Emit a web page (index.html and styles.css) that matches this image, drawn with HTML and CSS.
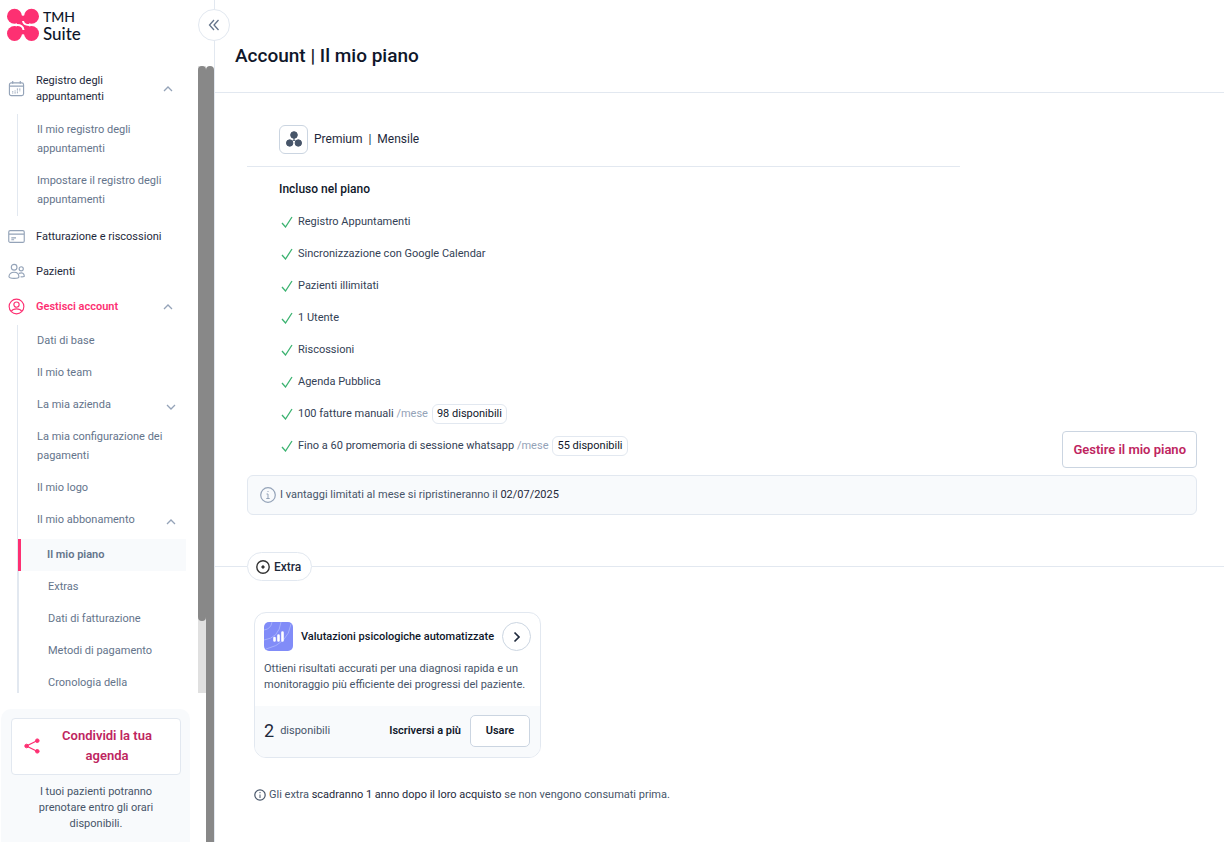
FILE: index.html
```html
<!DOCTYPE html>
<html lang="it">
<head>
    <meta charset="UTF-8">
    <meta name="viewport" content="width=device-width, initial-scale=1.0">
    <title>TMH Suite</title>
    <link rel="stylesheet" href="styles.css">
</head>
<body>
    <aside class="sidebar">
        <a href="#" class="logo">
            <svg width="34" height="34" viewBox="0 0 34 34" fill="#fd3072">
                <path d="M11 5.500q6 4.500 12 0v23q-6-4.500-12 0z"/>
                <path d="M26 17h-3q-5.500 0-6-4M8 17h3q6 0 6.500 5" fill="none" stroke="#fff" stroke-width="2"/>
                <circle cx="8.500" cy="8.300" r="7.500"/><circle cx="25.500" cy="8.300" r="7.500"/>
                <circle cx="8.500" cy="25.500" r="7.500"/><circle cx="25.500" cy="25.500" r="7.500"/>
            </svg>
            <span class="brand"><span class="tmh">TMH</span><span>Suite</span></span>
        </a>
        <button class="collapse" aria-label="Chiudi menu">
            <svg width="12" height="12" viewBox="0 0 12 12" fill="none" stroke="#64748b" stroke-width="1.300"><path d="M6 1L1.500 6L6 11M10.500 1L6 6l4.500 5"/></svg>
        </button>
        <div class="side-body">
            <div class="side-left">
                <div class="nav-wrap">
                    <nav class="nav">
                        <a href="#" class="item tall">
                            <svg class="ico" viewBox="0 0 18 18"><rect x="1.500" y="3" width="15" height="13.500" rx="2"/><path d="M1.500 6.500h15M5 1v3M13 1v3"/><path d="M5 12v2.500M7.500 11v3.500M10 9v5M12.500 9v3" stroke-dasharray="1.200 .8"/></svg>
                            <span>Registro degli appuntamenti</span>
                            <svg class="arrow" viewBox="0 0 10 6"><path d="M1 5l4-4 4 4"/></svg>
                        </a>
                        <div class="sub">
                            <a href="#">Il mio registro degli appuntamenti</a>
                            <a href="#">Impostare il registro degli appuntamenti</a>
                        </div>
                        <a href="#" class="item">
                            <svg class="ico" viewBox="0 0 18 18"><rect x=".8" y="2.800" width="16.400" height="12.400" rx="1.500"/><path d="M1 6.500h16M3.500 10.500h5M3.500 12.500h3"/></svg>
                            <span>Fatturazione e riscossioni</span>
                        </a>
                        <a href="#" class="item">
                            <svg class="ico" viewBox="0 0 18 18"><circle cx="6.500" cy="4.500" r="3"/><circle cx="14" cy="6.200" r="2.200"/><path d="M11.500 14.500q.5 1.800-5 1.800t-5.500-2q.5-4.500 5.500-4.500t5 4.700zM11.500 11q5.500-2 5.800 3q-1.500 1-4 .6"/></svg>
                            <span>Pazienti</span>
                        </a>
                        <a href="#" class="item active">
                            <svg class="ico" viewBox="0 0 18 18"><circle cx="9" cy="9" r="7.800"/><circle cx="9" cy="7" r="2.800"/><path d="M3.500 14q1.500-2.500 5.500-2.500t5.500 2.500"/></svg>
                            <span>Gestisci account</span>
                            <svg class="arrow" viewBox="0 0 10 6"><path d="M1 5l4-4 4 4"/></svg>
                        </a>
                        <div class="sub">
                            <a href="#">Dati di base</a>
                            <a href="#">Il mio team</a>
                            <a href="#">La mia azienda <svg class="arrow" viewBox="0 0 10 6"><path d="M1 1l4 4 4-4"/></svg></a>
                            <a href="#">La mia configurazione dei pagamenti</a>
                            <a href="#">Il mio logo</a>
                            <a href="#">Il mio abbonamento <svg class="arrow" viewBox="0 0 10 6"><path d="M1 5l4-4 4 4"/></svg></a>
                            <div class="subsub">
                                <a href="#" class="current">Il mio piano</a>
                                <a href="#">Extras</a>
                                <a href="#">Dati di fatturazione</a>
                                <a href="#">Metodi di pagamento</a>
                                <a href="#">Cronologia della</a>
                            </div>
                        </div>
                    </nav>
                    <div class="track"><div class="thumb"></div></div>
                </div>
                <div class="share">
                    <button class="share-btn">
                        <svg width="16" height="16" viewBox="0 0 16 16" fill="#fd3072" stroke="#fd3072"><path d="M13.500 2.500L2.500 8l11 5.500" fill="none" stroke-width="1.300"/><circle cx="13.300" cy="2.700" r="1.800"/><circle cx="2.600" cy="8" r="1.800"/><circle cx="13.300" cy="13.300" r="1.800"/></svg>
                        <span>Condividi la tua agenda</span>
                    </button>
                    <p>I tuoi pazienti potranno prenotare entro gli orari disponibili.</p>
                </div>
            </div>
            <div class="outer-bar"></div>
        </div>
    </aside>

    <main class="main">
        <header class="top"><h1>Account | Il mio piano</h1></header>

        <section class="plan">
            <div class="plan-name">
                <span class="plan-ico">
                    <svg width="16" height="16" viewBox="0 0 16 16" fill="#475569" stroke="#475569"><circle cx="8" cy="4" r="3.300"/><circle cx="3.700" cy="12" r="3.200"/><circle cx="12.300" cy="12" r="3.200"/><path d="M8 6v3L4 12M8 9l4 3" fill="none"/></svg>
                </span>
                <span>Premium&nbsp; |&nbsp; Mensile</span>
            </div>
            <div class="plan-row">
                <div class="plan-info">
                    <h2>Incluso nel piano</h2>
                    <ul class="checks">
                        <li><svg class="check" viewBox="0 0 12 12"><path d="M1 7l3.500 4L11 1"/></svg>Registro Appuntamenti</li>
                        <li><svg class="check" viewBox="0 0 12 12"><path d="M1 7l3.500 4L11 1"/></svg>Sincronizzazione con Google Calendar</li>
                        <li><svg class="check" viewBox="0 0 12 12"><path d="M1 7l3.500 4L11 1"/></svg>Pazienti illimitati</li>
                        <li><svg class="check" viewBox="0 0 12 12"><path d="M1 7l3.500 4L11 1"/></svg>1 Utente</li>
                        <li><svg class="check" viewBox="0 0 12 12"><path d="M1 7l3.500 4L11 1"/></svg>Riscossioni</li>
                        <li><svg class="check" viewBox="0 0 12 12"><path d="M1 7l3.500 4L11 1"/></svg>Agenda Pubblica</li>
                        <li><svg class="check" viewBox="0 0 12 12"><path d="M1 7l3.500 4L11 1"/></svg>100 fatture manuali&nbsp;<span class="month">/mese</span><span class="badge">98 disponibili</span></li>
                        <li><svg class="check" viewBox="0 0 12 12"><path d="M1 7l3.500 4L11 1"/></svg>Fino a 60 promemoria di sessione whatsapp&nbsp;<span class="month">/mese</span><span class="badge">55 disponibili</span></li>
                    </ul>
                </div>
                <button class="manage">Gestire il mio piano</button>
            </div>
            <div class="notice">
                <svg width="16" height="16" viewBox="0 0 16 16" fill="none" stroke="#94a3b8"><circle cx="8" cy="8" r="7.300" stroke-width="1.200"/><path d="M6.500 7H8v4.500M6.300 11.500h3.400M7.500 4.500h1"/></svg>
                <span>I vantaggi limitati al mese si ripristineranno il <b>02/07/2025</b></span>
            </div>
        </section>

        <div class="divider">
            <h2 class="pill">
                <svg width="14" height="14" viewBox="0 0 14 14" fill="none" stroke="#333"><circle cx="7" cy="7" r="6.200" stroke-width="1.400"/><circle cx="7" cy="7" r="1.200" fill="#333"/></svg>
                Extra
            </h2>
        </div>

        <section class="extra">
            <article class="card">
                <div class="card-head">
                    <svg class="card-ico" viewBox="0 0 29 29">
                        <rect width="29" height="29" rx="5" fill="#818cf8"/>
                        <g fill="none" stroke="#a5b0fb"><path d="M0 8Q7 7 8 0M0 18Q15 16 17 0M2 27Q24 22 27 2"/></g>
                        <path d="M10.500 16v2.500M14.500 13.500v5M18.500 10.500v8" stroke="#fff" stroke-width="2.600" stroke-linecap="round"/>
                    </svg>
                    <h3>Valutazioni psicologiche automatizzate</h3>
                    <button class="go" aria-label="Apri">
                        <svg width="8" height="12" viewBox="0 0 8 12" fill="none" stroke="#1e293b" stroke-width="1.700"><path d="M1.500 1.500L6 6l-4.500 4.500"/></svg>
                    </button>
                </div>
                <p>Ottieni risultati accurati per una diagnosi rapida e un monitoraggio più efficiente dei progressi del paziente.</p>
                <div class="card-foot">
                    <span class="num">2</span>
                    <span class="avail">disponibili</span>
                    <a href="#" class="more">Iscriversi a più</a>
                    <button class="use">Usare</button>
                </div>
            </article>
            <p class="expire">
                <svg width="12" height="12" viewBox="0 0 12 12" fill="none" stroke="#475569"><circle cx="6" cy="6" r="5.200" stroke-width="1.200"/><path d="M6 5.500V9M6 3v1.200"/></svg>
                <span>Gli extra <b>scadranno 1 anno dopo il loro acquisto</b> se non vengono consumati prima.</span>
            </p>
        </section>
    </main>
</body>
</html>
```
FILE: styles.css
```css
*{box-sizing:border-box;}
body{margin:0; display:flex; min-height:100vh; background:#fff; font-family:Roboto, "Noto Sans", sans-serif; font-size:11px; line-height:16px; color:#334155;}
a{color:inherit; text-decoration:none;}
h1,h2,h3,p,ul{margin:0; padding:0;}
button{font-family:inherit; background:#fff; cursor:pointer; padding:0;}
b{font-weight:400; color:#1e293b;}

/* sidebar */
.sidebar{position:relative; flex:none; display:flex; flex-direction:column; width:215px; height:100vh; border-right:1px solid #e2e8f0;}
.logo{display:flex; align-items:center; gap:3px; height:66px; flex:none; padding:0 0 16px 6px; font-family:Lato, sans-serif; font-size:17px; line-height:17px; font-weight:500; color:#0f172a;}
.brand{display:flex; flex-direction:column;}
.tmh{font-size:14px;}
.collapse{position:absolute; top:9px; right:-16px; width:32px; height:32px; border:1px solid #e2e8f0; border-radius:50%; display:flex; align-items:center; justify-content:center;}
.side-body{display:flex; flex:1; min-height:0;}
.side-left{flex:1; display:flex; flex-direction:column; gap:16px;}
.outer-bar{width:8px; background:#888; border-radius:4px 4px 0 0;}
.nav-wrap{display:flex; flex:1; min-height:0;}
.nav{flex:1; padding-right:12px; overflow:hidden;}
.track{width:8px; background:#e0e0e0;}
.thumb{height:555px; background:#888; border-radius:4px;}
.item{display:flex; align-items:center; gap:11px; height:35px; padding:0 13px 0 8px; color:#1e293b;}
.item span{flex:1;}
.item.tall{height:48px; padding-bottom:3px;}
.item.tall span{padding-right:32px;}
.item.active{color:#fd3072; font-weight:600;}
.ico{width:17px; height:17px; fill:none; stroke:#94a3b8; stroke-width:1.2;}
.active .ico{stroke:#fd3072;}
.arrow{width:10px; height:6px; flex:none; fill:none; stroke:#94a3b8; stroke-width:1.3;}
.sub{margin:0 0 3px 17px; border-left:1px solid #e2e8f0; line-height:19px; color:#64748b;}
.item.active + .sub{margin-top:1px;}
.sub a{display:flex; align-items:center; justify-content:space-between; padding:6px 10px 7px 19px;}
.sub .arrow{margin-top:5px;}
.sub .subsub a{padding-left:29px;}
.subsub{margin-top:3px; border-left:2px solid #e2e8f0; margin-left:-1px;}
.sub .subsub .current{margin-left:-1px; padding-left:26px; border-left:3px solid #fd3072; background:#f8fafc; font-weight:600;}
.share{flex:none; margin:0 16px 0 1px; padding:9px 9px 10px 10px; background:#f8fafc; border-radius:10px 10px 0 0; text-align:center; color:#475569;}
.share p{padding:9px 20px 0;}
.share-btn{display:flex; align-items:center; width:100%; padding:7px 12px 8px; border:1px solid #e2e8f0; border-radius:4px; font-size:13px; line-height:20px; font-weight:600; color:#be2560;}
.share-btn span{flex:1; padding:0 6px 0 12px;}

/* main */
.main{flex:1; min-width:0;}
.top{height:93px; padding:43px 20px 0; border-bottom:1px solid #e2e8f0;}
.top h1{font-size:19px; line-height:26px; font-weight:500; color:#0f172a;}
.plan{padding:32px 27px 0 32px;}
.plan-name{display:flex; align-items:center; gap:6px; width:75%; height:42px; padding:0 32px 13px; border-bottom:1px solid #e2e8f0; font-size:12px; color:#1e293b;}
.plan-ico{display:flex; align-items:center; justify-content:center; width:29px; height:29px; border:1px solid #cbd5e1; border-radius:6px;}
.plan-row{display:flex; align-items:flex-end; justify-content:space-between; padding-bottom:7px;}
.plan-info{padding:13px 0 6px 32px;}
.plan-info h2{font-size:12px; line-height:18px; font-weight:500; color:#0f172a;}
.checks{list-style:none; padding-top:8px;}
.checks li{display:flex; align-items:center; height:32px;}
.check{width:12px; height:12px; margin:0 5px 0 2px; fill:none; stroke:#3cb371; stroke-width:1.3;}
.month{color:#94a3b8;}
.badge{margin-left:4px; padding:1px 4px; border:1px solid #e2e8f0; border-radius:6px; color:#0f172a;}
.manage{padding:0 10px; height:37px; border:1px solid #cbd5e1; border-radius:4px; font-size:13px; font-weight:600; color:#be2560;}
.notice{display:flex; align-items:center; gap:4px; height:40px; padding:0 12px; background:#f8fafc; border:1px solid #e2e8f0; border-radius:6px; color:#475569;}
.divider{display:flex; align-items:center; margin-top:37px;}
.divider::before{content:""; width:32px; height:1px; background:#e2e8f0;}
.divider::after{content:""; flex:1; height:1px; background:#e2e8f0;}
.pill{display:flex; align-items:center; gap:4px; height:29px; padding:0 10px 0 8px; border:1px solid #e2e8f0; border-radius:15px; font-size:12px; font-weight:500; color:#1e293b;}
.extra{padding:31px 39px;}
.card{width:287px; border:1px solid #e2e8f0; border-radius:12px; overflow:hidden; color:#475569;}
.card-head{display:flex; align-items:center; gap:8px; padding:9px 10px 0 9px;}
.card-ico{flex:none; width:29px; height:29px;}
.card-head h3{flex:1; font-size:11px; font-weight:500; color:#0f172a; white-space:nowrap;}
.go{flex:none; display:flex; align-items:center; justify-content:center; width:29px; height:29px; border:1px solid #cbd5e1; border-radius:50%;}
.card p{padding:10px 9px 13px;}
.card-foot{display:flex; align-items:center; height:51px; padding:0 10px 2px 9px; background:#f8fafc;}
.num{font-size:18px; margin-right:6px; color:#1e293b;}
.avail{flex:1;}
.more{margin-right:9px; font-weight:600; color:#0f172a;}
.use{width:60px; height:32px; border:1px solid #cbd5e1; border-radius:5px; font-size:11px; font-weight:600; color:#0f172a;}
.expire{display:flex; align-items:center; gap:3px; padding-top:29px; color:#475569;}
```
